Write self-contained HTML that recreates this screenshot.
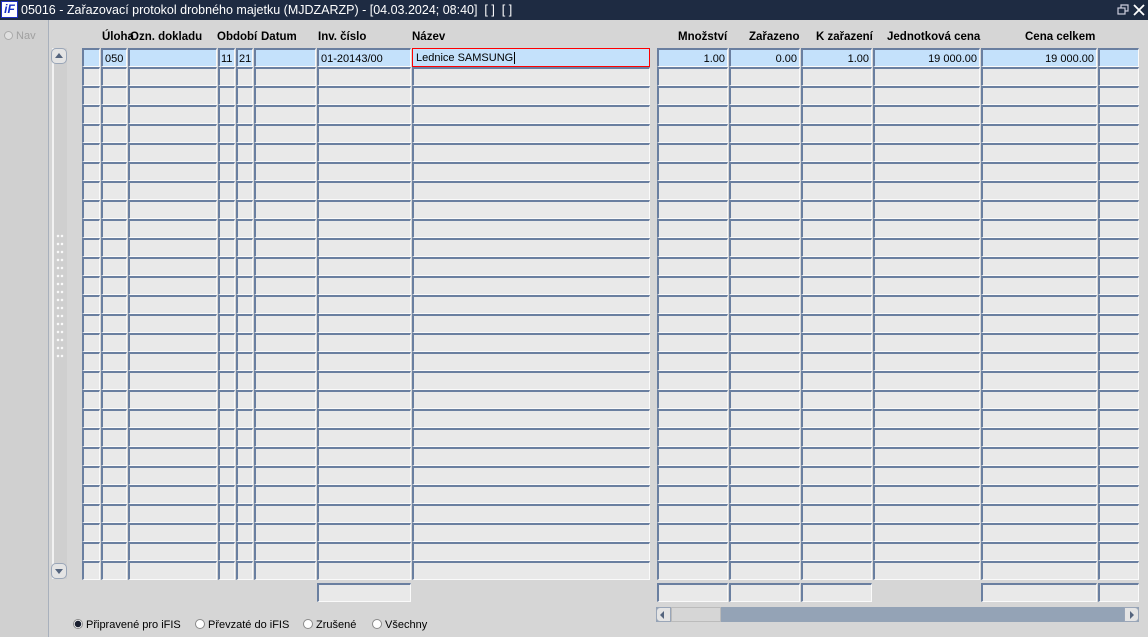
<!DOCTYPE html>
<html><head><meta charset="utf-8">
<style>
*{margin:0;padding:0;box-sizing:border-box}
body{width:1148px;height:637px;overflow:hidden;background:#d6d6d6;font-family:"Liberation Sans",Arial,sans-serif;font-size:11px;color:#000;position:relative}
.a{position:absolute}
#title{left:0;top:0;width:1148px;height:20px;background:#1e2b42;color:#fff;font-size:12.5px;line-height:20px}
#logo{left:1px;top:1px;width:17px;height:17px;background:#fff;border:1px solid #2030c0;color:#1830c8;font-weight:bold;font-style:italic;font-size:12px;line-height:15px;text-align:center}
#left{left:0;top:20px;width:49px;height:617px;background:#d0d0d0;border-right:1px solid #a8b0bc}
.c{position:absolute;height:19px;background:#e9e9e9;border-top:2px solid #6a7fa0;border-left:2px solid #6a7fa0;border-right:1px solid #fafafa;border-bottom:1px solid #fafafa;font-size:11px;line-height:16px;padding:1px 2px 0;white-space:nowrap;overflow:hidden}
.b{background:#c4e1fb}
.r{text-align:right}
.h{position:absolute;top:31px;font-weight:bold;font-size:11.5px}
.rad{position:absolute;top:618px;font-size:11px;line-height:14px}
.rad i{display:inline-block;width:10px;height:10px;border-radius:50%;background:#fff;border:1px solid #8a8a8a;vertical-align:-1px;margin-right:3px}
.rad i.on{background:radial-gradient(circle,#1a2030 0 3px,#fff 3.5px)}
</style></head><body>
<div id="title" class="a"><span style="position:absolute;left:21px">05016 - Zařazovací protokol drobného majetku (MJDZARZP) - [04.03.2024; 08:40]&nbsp; [ ]&nbsp; [ ]</span>
<svg class="a" style="left:1117px;top:4px" width="12" height="12"><rect x="1" y="4" width="7" height="6" fill="none" stroke="#ccd" stroke-width="1.2"/><path d="M4 4V1h7v6H8" fill="none" stroke="#ccd" stroke-width="1.2"/></svg>
<svg class="a" style="left:1133px;top:4px" width="12" height="12"><path d="M1 1L11 11M11 1L1 11" stroke="#fff" stroke-width="1.8"/></svg>
</div>
<div id="logo" class="a">iF</div>
<div id="left" class="a"><span class="a" style="left:4px;top:10px;color:#a0a0a0;font-size:11px"><i style="display:inline-block;width:9px;height:9px;border-radius:50%;border:1px solid #aaa;background:#e0e0e0;vertical-align:-1px"></i> Nav</span></div>

<div class="h" style="left:102px">Úloha</div>
<div class="h" style="left:130px">Ozn. dokladu</div>
<div class="h" style="left:217px">Období</div>
<div class="h" style="left:261px">Datum</div>
<div class="h" style="left:318px">Inv. číslo</div>
<div class="h" style="left:412px">Název</div>
<div class="h" style="left:678px">Množství</div>
<div class="h" style="left:749px">Zařazeno</div>
<div class="h" style="left:816px">K zařazení</div>
<div class="h" style="left:887px">Jednotková cena</div>
<div class="h" style="left:1025px">Cena celkem</div>

<div class="a" style="left:52px;top:48px;width:15px;height:531px;background:#cfcfcf;border-left:2px solid #f2f2f2"></div>
<div class="a" style="left:51px;top:48px;width:16px;height:16px;border:1px solid #9aa6b8;border-radius:5px;background:#e4e4e4"><div class="a" style="left:3px;top:4px;width:0;height:0;border-left:4px solid transparent;border-right:4px solid transparent;border-bottom:5px solid #55657e"></div></div>
<div class="a" style="left:51px;top:563px;width:16px;height:16px;border:1px solid #9aa6b8;border-radius:5px;background:#e4e4e4"><div class="a" style="left:3px;top:5px;width:0;height:0;border-left:4px solid transparent;border-right:4px solid transparent;border-top:5px solid #55657e"></div></div>
<div class="a" style="left:56px;top:232px;width:8px;height:130px;background-image:radial-gradient(circle,#fafafa 1px,transparent 1.5px);background-size:4px 8px"></div>

<div id="grid"></div>

<div class="c b" style="left:101px;top:48px;width:26px">050</div>
<div class="c b" style="left:218px;top:48px;width:17px;padding:1px 1px 0">11</div>
<div class="c b" style="left:236px;top:48px;width:17px;padding:1px 1px 0">21</div>
<div class="c b" style="left:317px;top:48px;width:94px">01-20143/00</div>
<div class="c b" style="left:412px;top:48px;width:238px;border:1px solid #ff0000;padding:1px 2px 0 3px;line-height:16px">Lednice SAMSUNG<span style="border-left:1px solid #000;margin-left:1px"></span></div>
<div class="c b r" style="left:657px;top:48px;width:71px">1.00</div>
<div class="c b r" style="left:729px;top:48px;width:71px">0.00</div>
<div class="c b r" style="left:801px;top:48px;width:71px">1.00</div>
<div class="c b r" style="left:873px;top:48px;width:107px">19 000.00</div>
<div class="c b r" style="left:981px;top:48px;width:116px">19 000.00</div>

<div class="a" style="left:656px;top:607px;width:483px;height:15px;background:#94a3b6"></div>
<div class="a" style="left:656px;top:607px;width:15px;height:15px;background:#e4e4e4;border:1px solid #9aa6b8;border-radius:4px 0 0 4px"><div class="a" style="left:3px;top:3px;border-top:4px solid transparent;border-bottom:4px solid transparent;border-right:4px solid #55657e"></div></div>
<div class="a" style="left:671px;top:607px;width:50px;height:15px;background:#d6d6d6;border:1px solid #bbb"></div>
<div class="a" style="left:1124px;top:607px;width:15px;height:15px;background:#e4e4e4;border:1px solid #9aa6b8;border-radius:0 4px 4px 0"><div class="a" style="left:5px;top:3px;border-top:4px solid transparent;border-bottom:4px solid transparent;border-left:4px solid #55657e"></div></div>

<div class="rad" style="left:73px"><i class="on"></i>Připravené pro iFIS</div>
<div class="rad" style="left:195px"><i></i>Převzaté do iFIS</div>
<div class="rad" style="left:303px"><i></i>Zrušené</div>
<div class="rad" style="left:372px"><i></i>Všechny</div>

<script>
var cols=[[82,18],[101,26],[128,89],[218,17],[236,17],[254,62],[317,94],[412,238],[657,71],[729,71],[801,71],[873,107],[981,116],[1098,41]];
var h='';
for(var r=0;r<28;r++){var y=48+r*19;
 for(var k=0;k<cols.length;k++){var cls=r==0?'c b':'c';
  if(r==0&&(k==1||k==3||k==4||k>=6&&k<=12))continue;
  h+='<div class="'+cls+'" style="left:'+cols[k][0]+'px;top:'+y+'px;width:'+cols[k][1]+'px"></div>';}}
[[317,94],[657,71],[729,71],[801,71],[981,116],[1098,41]].forEach(function(c){h+='<div class="c" style="left:'+c[0]+'px;top:583px;width:'+c[1]+'px"></div>';});
document.getElementById('grid').innerHTML=h;
</script>
</body></html>
